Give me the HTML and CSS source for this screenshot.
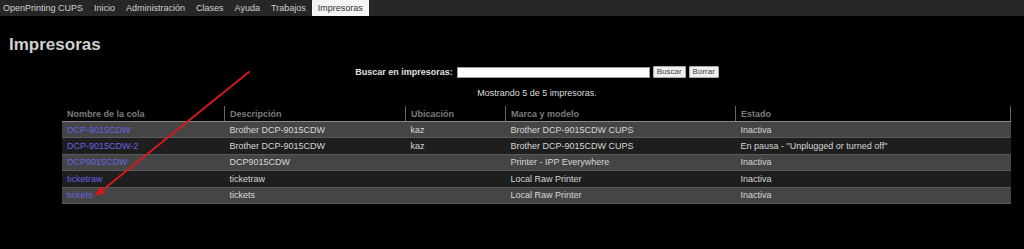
FILE: index.html
```html
<!DOCTYPE html>
<html lang="es">
<head>
<meta charset="utf-8">
<title>Impresoras - CUPS</title>
<link rel="stylesheet" href="styles.css">
</head>
<body>
<nav class="nav">
  <a class="nav-item">OpenPrinting CUPS</a>
  <a class="nav-item">Inicio</a>
  <a class="nav-item">Administración</a>
  <a class="nav-item">Clases</a>
  <a class="nav-item">Ayuda</a>
  <a class="nav-item">Trabajos</a>
  <a class="nav-item active">Impresoras</a>
</nav>
<main class="page">
  <h1 class="title">Impresoras</h1>
  <form class="search">
    <label class="search-label">Buscar en impresoras:</label>
    <input class="search-input" type="text">
    <button class="btn" type="button">Buscar</button>
    <button class="btn" type="button">Borrar</button>
  </form>
  <p class="count">Mostrando 5 de 5 impresoras.</p>
  <table class="list">
    <thead>
      <tr>
        <th class="c1">Nombre de la cola</th>
        <th class="c2">Descripción</th>
        <th class="c3">Ubicación</th>
        <th class="c4">Marca y modelo</th>
        <th class="c5">Estado</th>
      </tr>
    </thead>
    <tbody>
      <tr><td><a>DCP-9015CDW</a></td><td>Brother DCP-9015CDW</td><td>kaz</td><td>Brother DCP-9015CDW CUPS</td><td>Inactiva</td></tr>
      <tr><td><a>DCP-9015CDW-2</a></td><td>Brother DCP-9015CDW</td><td>kaz</td><td>Brother DCP-9015CDW CUPS</td><td>En pausa - "Unplugged or turned off"</td></tr>
      <tr><td><a>DCP9015CDW</a></td><td>DCP9015CDW</td><td></td><td>Printer - IPP Everywhere</td><td>Inactiva</td></tr>
      <tr><td><a>ticketraw</a></td><td>ticketraw</td><td></td><td>Local Raw Printer</td><td>Inactiva</td></tr>
      <tr><td><a>tickets</a></td><td>tickets</td><td></td><td>Local Raw Printer</td><td>Inactiva</td></tr>
    </tbody>
  </table>
</main>
<svg class="arrow" width="1024" height="249" viewBox="0 0 1024 249">
  <line x1="249" y1="72" x2="103" y2="189.7" stroke="#d41a1a" stroke-width="2" stroke-linecap="round"/>
  <polygon points="95,196 100.3,186.6 105.3,192.8" fill="#e01818"/>
</svg>
</body>
</html>
```
FILE: styles.css
```css
html, body {
  margin: 0;
  padding: 0;
  background: #000;
  height: 249px;
  overflow: hidden;
}
body {
  font-family: "Liberation Sans", Arial, sans-serif;
  font-size: 9px;
  color: #ddd;
  position: relative;
}
.nav {
  display: flex;
  align-items: stretch;
  height: 16px;
  background: #262626;
}
.nav-item {
  display: flex;
  align-items: center;
  padding: 0 5px;
  color: #d0d0d0;
  font-size: 9px;
}
.nav-item:first-child { padding-left: 3px; }
.nav-item + .nav-item { margin-left: 1px; }
.nav-item.active {
  background: #f4f4f4;
  color: #333;
  padding: 0 6px;
  margin-left: 1px;
}
.title {
  margin: 19px 0 0 9px;
  font-size: 17px;
  line-height: 20px;
  font-weight: bold;
  color: #cfcfcf;
}
.search {
  display: flex;
  justify-content: center;
  align-items: center;
  gap: 3px;
  margin: 11px 0 0 0;
  padding-left: 50px;
  height: 12px;
}
.search-label {
  font-weight: bold;
  color: #e0e0e0;
  margin-right: 1px;
}
.search-input {
  width: 191px;
  height: 9px;
  padding: 0;
  border: 1px solid #999;
  background: #fff;
  margin: 0;
}
.btn {
  font-family: "Liberation Sans", Arial, sans-serif;
  font-size: 8px;
  height: 12px;
  line-height: 10px;
  padding: 0 3px;
  background: #eee;
  color: #444;
  border: 1px solid #aaa;
  border-radius: 1px;
  margin: 0;
}
.count {
  margin: 9px 0 0 0;
  padding-left: 50px;
  text-align: center;
  line-height: 12px;
  color: #ddd;
}
.list {
  margin: 7px 0 0 62px;
  width: 949px;
  border-collapse: collapse;
  table-layout: fixed;
}
.list th {
  text-align: left;
  font-weight: bold;
  color: #7c7c7c;
  height: 15px;
  padding: 0 5px;
  border-left: 1px solid #666;
  border-bottom: 1px solid #888;
}
.list th.c1 { border-left: none; }
.list th.c5 { border-right: 1px solid #666; }
.c1 { width: 152px; }
.c2 { width: 170px; }
.c3 { width: 89px; }
.c4 { width: 219px; }
.list td {
  height: 15.4px;
  padding: 0 5px;
  border-bottom: 1px solid #5a5a5a;
  color: #d6d6d6;
  white-space: nowrap;
}
.list tbody tr:nth-child(odd) { background: #454545; }
.list tbody tr:nth-child(even) { background: #1e1e1e; }
.list a { color: #6464e0; }
.arrow {
  position: absolute;
  left: 0;
  top: 0;
  pointer-events: none;
}
```
